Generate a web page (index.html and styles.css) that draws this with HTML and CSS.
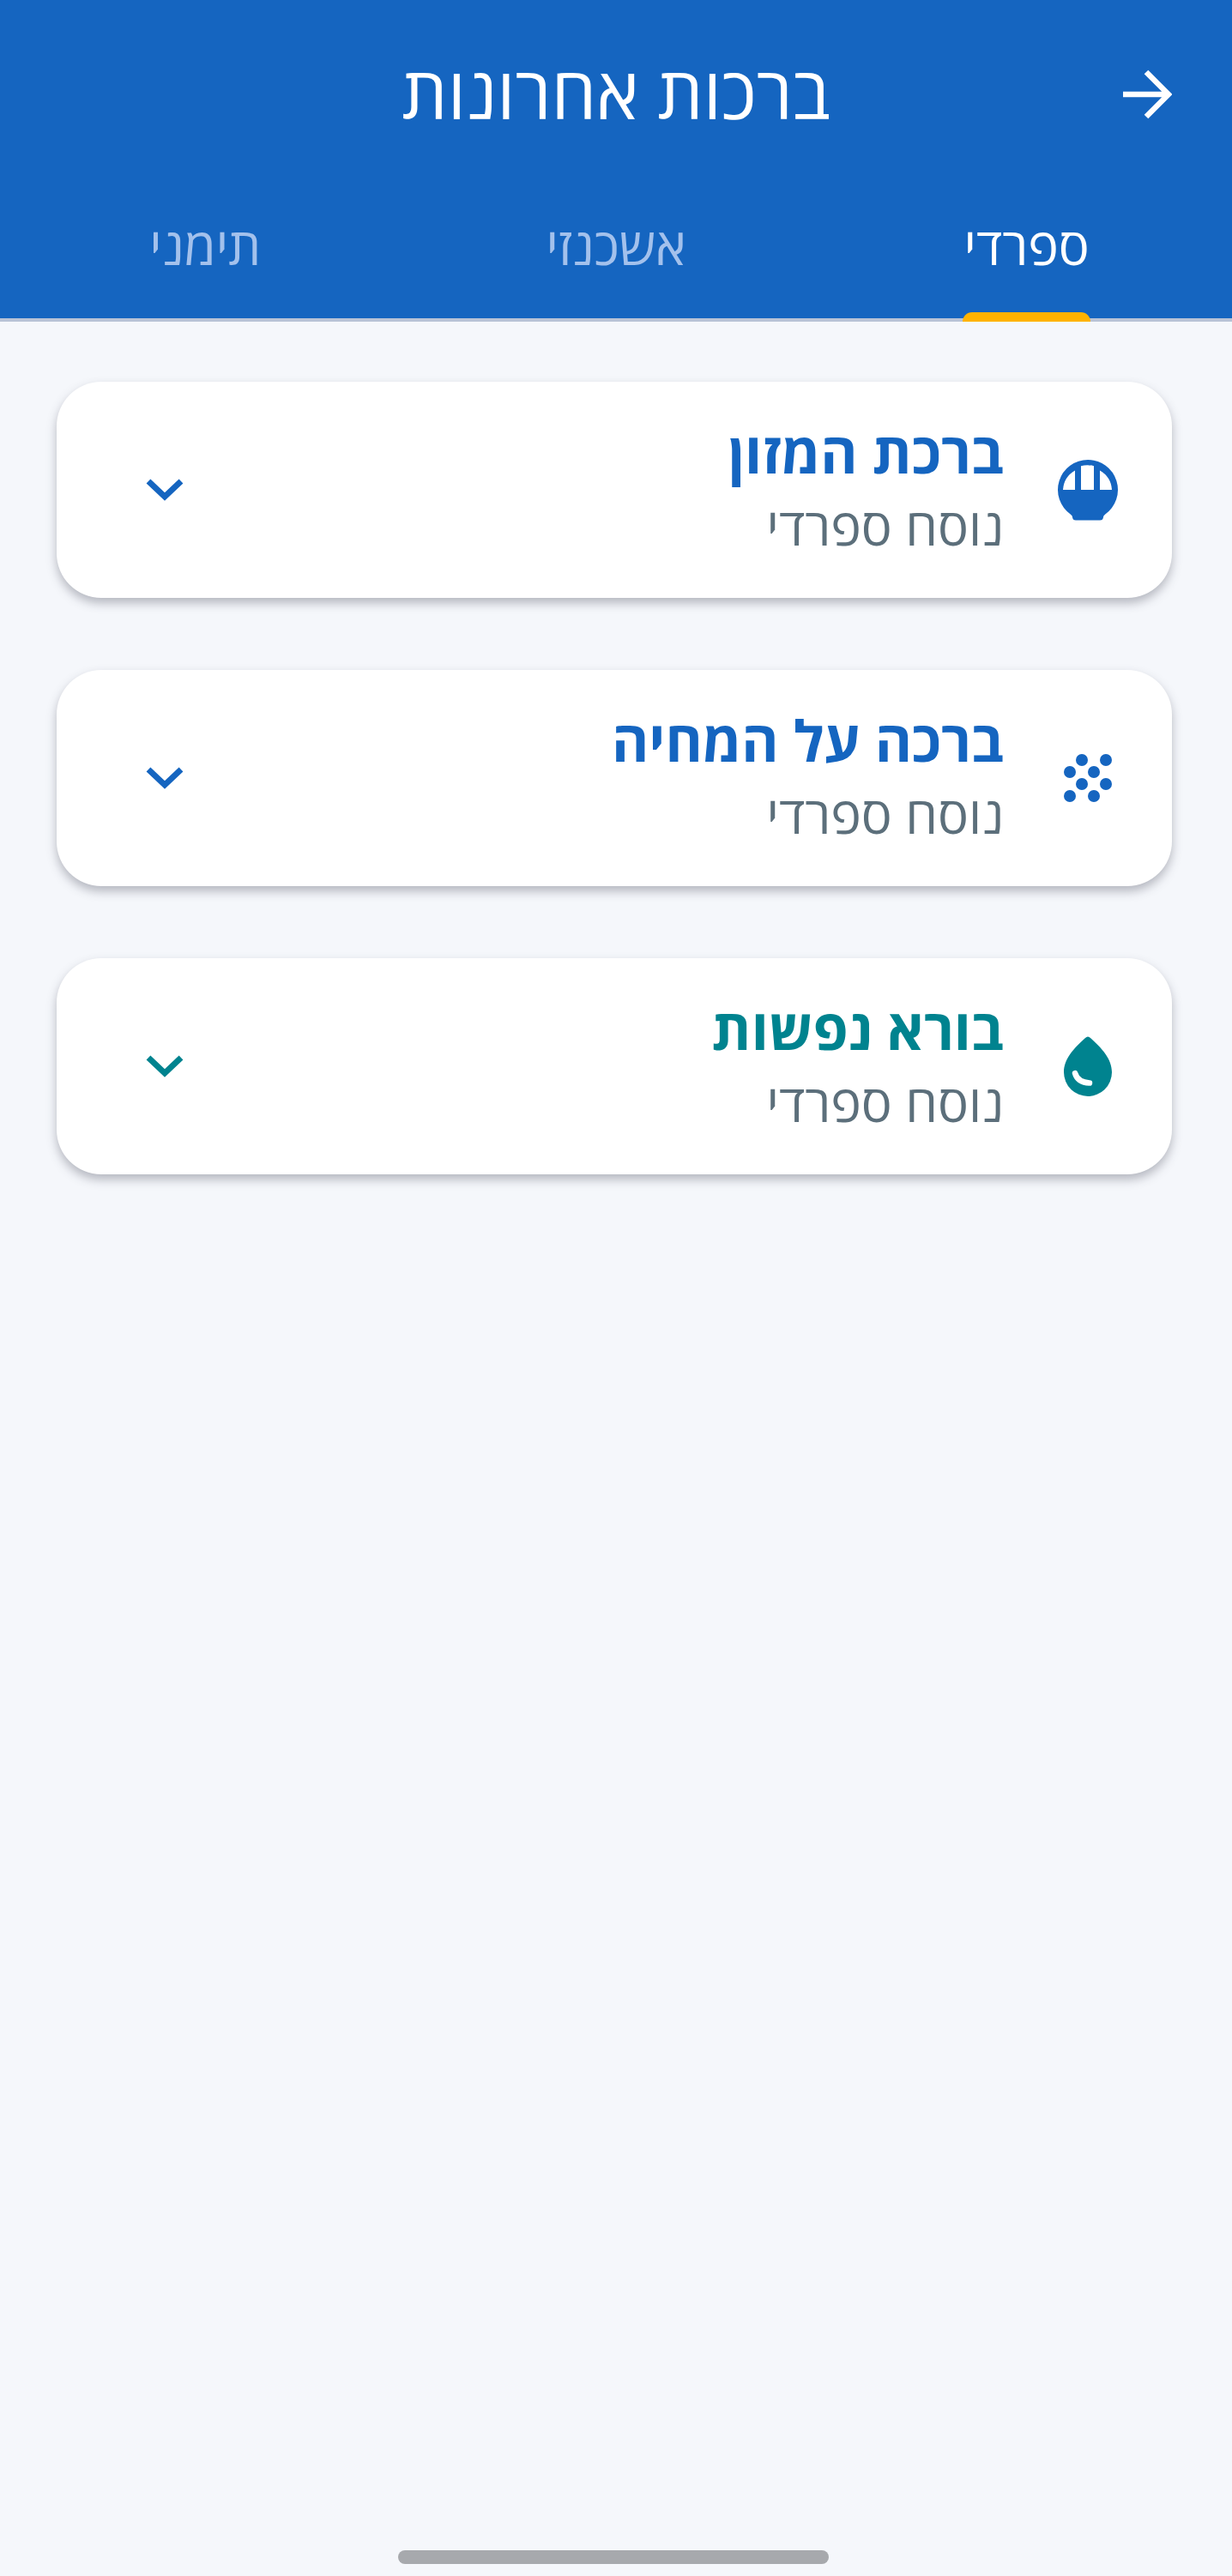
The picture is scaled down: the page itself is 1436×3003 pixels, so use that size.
FILE: index.html
```html
<!DOCTYPE html>
<html lang="he" dir="rtl">
<head>
    <meta charset="UTF-8">
    <meta name="viewport" content="width=device-width, initial-scale=1.0">
    <title>ברכות אחרונות</title>
    <link rel="stylesheet" href="styles.css">
</head>
<body>
    <header class="app-bar">
        <div class="title-row">
            <button class="back-btn" type="button" aria-label="חזרה">
                <svg width="58" height="58" viewBox="0 0 58 58" fill="none" stroke="#fff" stroke-width="6.500">
                    <path d="M1 29H53M28 3L54 29L28 55"/>
                </svg>
            </button>
            <h1>ברכות אחרונות</h1>
        </div>
        <nav class="tabs">
            <a class="tab active">ספרדי</a>
            <a class="tab">אשכנזי</a>
            <a class="tab">תימני</a>
        </nav>
    </header>

    <main class="list">
        <section class="card">
            <svg class="card-icon" width="72" height="72" viewBox="0 0 72 72">
                <path fill="#1565c0" fill-rule="evenodd" d="M36 1a35 35 0 0 1 20 63.700q-2 1.500-2 3.300a4 4 0 0 1-4 3.500h-28a4 4 0 0 1-4-3.500q0-1.800-2-3.300A35 35 0 0 1 36 1ZM21 13.500A28 28 0 0 0 7 36h14ZM28 8.300V36h15V8.300a28 28 0 0 0-15 0ZM50 13.500V36h14A28 28 0 0 0 50 13.500Z"/>
            </svg>
            <div class="card-text">
                <h2 class="blue">ברכת המזון</h2>
                <p>נוסח ספרדי</p>
            </div>
            <svg class="chevron" width="44" height="28" viewBox="0 0 44 28" fill="none" stroke="#1565c0" stroke-width="7">
                <path d="M3 4L22 22L41 4"/>
            </svg>
        </section>

        <section class="card">
            <svg class="card-icon" width="72" height="72" viewBox="0 0 72 72" fill="#1565c0">
                <circle cx="29" cy="15" r="7"/>
                <circle cx="57" cy="15" r="7"/>
                <circle cx="15" cy="29" r="7"/>
                <circle cx="43" cy="29" r="7"/>
                <circle cx="29" cy="43" r="7"/>
                <circle cx="57" cy="43" r="7"/>
                <circle cx="15" cy="57" r="7"/>
                <circle cx="43" cy="57" r="7"/>
            </svg>
            <div class="card-text">
                <h2 class="blue">ברכה על המחיה</h2>
                <p>נוסח ספרדי</p>
            </div>
            <svg class="chevron" width="44" height="28" viewBox="0 0 44 28" fill="none" stroke="#1565c0" stroke-width="7">
                <path d="M3 4L22 22L41 4"/>
            </svg>
        </section>

        <section class="card">
            <svg class="card-icon" width="72" height="72" viewBox="0 0 72 72">
                <path fill="#00838f" d="M36 1.500Q37.500 1.500 39 3C52 15 64 27 64 43A28 28 0 0 1 8 43C8 27 20 15 33 3Q34.500 1.500 36 1.500Z"/>
                <path fill="none" stroke="#fff" stroke-width="6.500" stroke-linecap="round" d="M21 44C23 51 29 55 38 55.500"/>
            </svg>
            <div class="card-text">
                <h2 class="teal">בורא נפשות</h2>
                <p>נוסח ספרדי</p>
            </div>
            <svg class="chevron" width="44" height="28" viewBox="0 0 44 28" fill="none" stroke="#00838f" stroke-width="7">
                <path d="M3 4L22 22L41 4"/>
            </svg>
        </section>
    </main>

    <div class="home-bar"></div>
</body>
</html>
```

FILE: styles.css
```css
* {
    box-sizing: border-box;
}

html,
body {
    height: 100%;
}

body {
    margin: 0;
    display: flex;
    flex-direction: column;
    background-color: #f5f7fb;
    font-family: "Open Sans", "Noto Sans", sans-serif;
}

.app-bar {
    height: 375px;
    background-color: #1565c0;
    border-bottom: 4px solid #b9c3d6;
}

.title-row {
    position: relative;
    height: 252px;
    display: flex;
    justify-content: center;
    padding-top: 61px;
}

.title-row h1 {
    margin: 0;
    color: #fff;
    font-size: 84px;
    font-weight: 400;
    line-height: 92px;
}

.back-btn {
    position: absolute;
    top: 81px;
    right: 70px;
    padding: 0;
    border: none;
    background: none;
    line-height: 0;
}

.tabs {
    display: flex;
    height: 119px;
}

.tab {
    position: relative;
    flex: 1;
    text-align: center;
    color: #a3c1ec;
    font-size: 60px;
    line-height: 68px;
}

.tab.active {
    color: #fff;
}

.tab.active::after {
    content: "";
    position: absolute;
    left: 165px;
    right: 165px;
    top: 112px;
    height: 11px;
    background-color: #ffb300;
    border-radius: 12px 12px 0 0;
}

.list {
    flex: 1;
    display: flex;
    flex-direction: column;
    gap: 84px;
    padding: 70px 70px 0 66px;
}

.card {
    display: flex;
    align-items: center;
    height: 252px;
    padding: 0 62px 0 104px;
    background-color: #fff;
    border-radius: 52px;
    box-shadow: 0 6px 12px rgba(60, 64, 80, 0.35);
}

.card-icon {
    flex-shrink: 0;
}

.card-text {
    flex: 1;
    margin-right: 62px;
}

.card-text h2 {
    margin: 0;
    font-size: 66px;
    font-weight: 700;
    line-height: 78px;
}

.card-text p {
    margin: 6px 0 0 0;
    color: #5c6f7b;
    font-size: 60px;
    line-height: 84px;
}

.blue {
    color: #1565c0;
}

.teal {
    color: #00838f;
}

.chevron {
    flex-shrink: 0;
}

.home-bar {
    width: 502px;
    height: 16px;
    margin: 0 470px 14px auto;
    border-radius: 8px;
    background-color: #a7a9ad;
}
```
